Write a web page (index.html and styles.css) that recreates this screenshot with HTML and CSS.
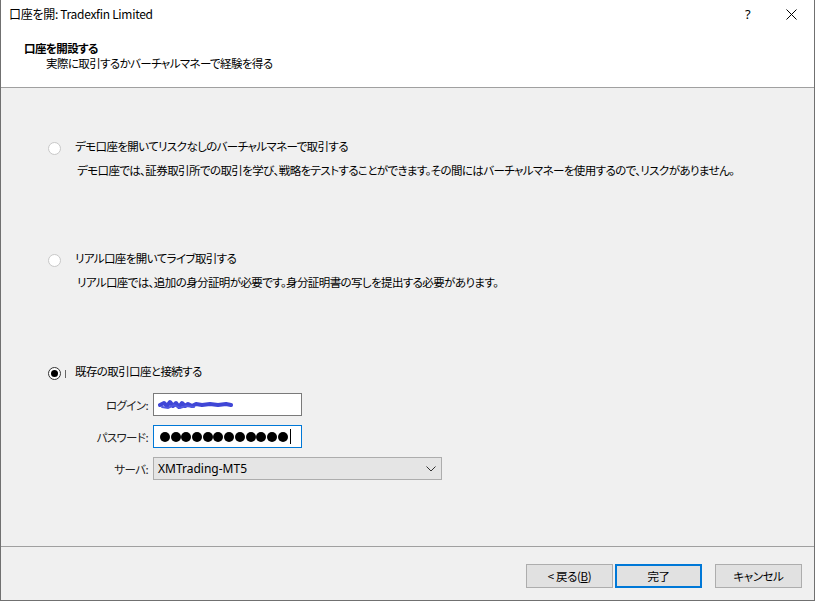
FILE: index.html
```html
<!DOCTYPE html>
<html lang="ja">
<head>
  <meta charset="UTF-8" />
  <title>口座を開</title>
  <link rel="stylesheet" href="styles.css">
</head>
<body>
  <div class="window">
    <div class="titlebar">
      <span class="title">口座を開: Tradexfin Limited</span>
      <span class="help">?</span>
      <svg class="close" width="11" height="11" viewBox="0 0 11 11">
        <path d="M0.5 0.5 L10.5 10.5 M10.5 0.5 L0.5 10.5" stroke="#000" stroke-width="1" fill="none" />
      </svg>
    </div>

    <div class="header">
      <div class="header-title">口座を開設する</div>
      <div class="header-sub">実際に取引するかバーチャルマネーで経験を得る</div>
    </div>

    <div class="content">
      <div class="option">
        <div class="option-row">
          <span class="radio"></span>
          <span class="option-label">デモ口座を開いてリスクなしのバーチャルマネーで取引する</span>
        </div>
        <div class="option-desc">デモ口座では、証券取引所での取引を学び、戦略をテストすることができます。その間にはバーチャルマネーを使用するので、リスクがありません。</div>
      </div>

      <div class="option">
        <div class="option-row">
          <span class="radio"></span>
          <span class="option-label">リアル口座を開いてライブ取引する</span>
        </div>
        <div class="option-desc">リアル口座では、追加の身分証明が必要です。身分証明書の写しを提出する必要があります。</div>
      </div>

      <div class="option last">
        <div class="option-row">
          <span class="radio checked"></span>
          <span class="focus-mark"></span>
          <span class="option-label">既存の取引口座と接続する</span>
        </div>

        <div class="fields">
          <label class="field-label">ログイン:</label>
          <div class="input">
            <svg class="scribble" width="76" height="14" viewBox="0 0 76 14">
              <path d="M2 7 L6 5 L9 8 L12 4 L15 8 L18 5 L21 9 L24 5 L27 8 L30 6 L34 8 L38 6 L44 7 L52 6 L60 7 L68 6 L73 7" stroke="#3f46d6" stroke-width="4" fill="none" stroke-linecap="round" stroke-linejoin="round" />
              <path d="M4 9 L10 10 L16 7 L22 10 L28 8 L36 9" stroke="#5058e0" stroke-width="2" fill="none" stroke-linecap="round" />
            </svg>
          </div>

          <label class="field-label">パスワード:</label>
          <div class="input focused">
            <span class="dot"></span><span class="dot"></span><span class="dot"></span><span class="dot"></span><span class="dot"></span><span class="dot"></span><span class="dot"></span><span class="dot"></span><span class="dot"></span><span class="dot"></span><span class="dot"></span><span class="dot"></span><span class="caret"></span>
          </div>

          <label class="field-label">サーバ:</label>
          <div class="select">
            <span>XMTrading-MT5</span>
            <svg width="10" height="6" viewBox="0 0 10 6">
              <path d="M0.5 0.5 L5 5 L9.5 0.5" stroke="#333" stroke-width="1" fill="none" />
            </svg>
          </div>
        </div>
      </div>
    </div>

    <div class="footer">
      <button class="btn">&lt; 戻る(<u>B</u>)</button>
      <button class="btn default">完了</button>
      <button class="btn cancel">キャンセル</button>
    </div>
  </div>
</body>
</html>
```

FILE: styles.css
```css
body {
  margin: 0;
  font-family: "Noto Sans CJK JP", "Noto Sans", sans-serif;
  font-size: 11.5px;
  letter-spacing: -0.6px;
  color: #000;
  background: #fff;
}
.window {
  width: 815px;
  height: 601px;
  box-sizing: border-box;
  border: 1px solid #707070;
  border-top: none;
  display: flex;
  flex-direction: column;
  background: #f0f0f0;
  font-feature-settings: "palt";
}
.titlebar {
  height: 30px;
  background: #fff;
  display: flex;
  align-items: center;
  padding-left: 8px;
  padding-right: 17px;
}
.title {
  flex: 1;
  line-height: 16px;
  margin-top: -2px;
  font-size: 12px;
  letter-spacing: -0.3px;
}
.help {
  font-family: "Noto Sans", sans-serif;
  font-size: 13px;
  margin-right: 36px;
  margin-top: -2px;
}
.close {
  margin-top: -2px;
}
.header {
  height: 58px;
  background: #fff;
  border-bottom: 1px solid #a0a0a0;
  padding-left: 23px;
  padding-top: 10px;
  box-sizing: border-box;
}
.header-title {
  font-weight: bold;
  line-height: 16px;
}
.header-sub {
  padding-left: 22px;
  line-height: 16px;
  margin-top: -1px;
}
.content {
  flex: 1;
  padding-left: 47px;
  padding-top: 50px;
  border-bottom: 1px solid #a0a0a0;
}
.option + .option {
  margin-top: 72px;
}
.option.last {
  margin-top: 73px;
}
.option-row {
  display: flex;
  align-items: center;
  height: 16px;
}
.radio {
  width: 11px;
  height: 11px;
  border: 1px solid #c8c8c8;
  border-radius: 50%;
  background: #fff;
  margin-right: 14px;
  margin-top: 4px;
  position: relative;
}
.radio.checked {
  border-color: #333;
  margin-right: 4px;
}
.radio.checked::after {
  content: "";
  position: absolute;
  left: 2px;
  top: 2px;
  width: 7px;
  height: 7px;
  border-radius: 50%;
  background: #000;
}
.focus-mark {
  width: 1px;
  height: 8px;
  background: #666;
  margin-right: 9px;
  margin-top: 6px;
}
.option-desc {
  margin-top: 8px;
  padding-left: 29px;
  line-height: 16px;
}
.fields {
  display: grid;
  grid-template-columns: 100px auto;
  column-gap: 5px;
  row-gap: 9px;
  margin-top: 14px;
  align-items: center;
}
.field-label {
  text-align: right;
  color: #222;
}
.input {
  width: 149px;
  height: 23px;
  box-sizing: border-box;
  border: 1px solid #7a7a7a;
  background: #fff;
  display: flex;
  align-items: center;
  padding-left: 4px;
}
.input.focused {
  border-color: #0078d7;
  padding-left: 6px;
  gap: 0.7px;
}
.dot {
  width: 10px;
  height: 10px;
  border-radius: 50%;
  background: #000;
}
.caret {
  width: 1px;
  height: 15px;
  background: #000;
  margin-left: 2px;
}
.select {
  width: 289px;
  height: 23px;
  box-sizing: border-box;
  border: 1px solid #adadad;
  background: #e5e5e5;
  display: flex;
  align-items: center;
  justify-content: space-between;
  padding-left: 4px;
  padding-right: 5px;
  font-family: "Noto Sans", sans-serif;
  font-size: 12px;
  letter-spacing: 0;
}
.footer {
  height: 53px;
  display: flex;
  justify-content: flex-end;
  align-items: flex-start;
  padding-top: 17px;
  padding-right: 12px;
  box-sizing: border-box;
}
.btn {
  width: 87px;
  height: 24px;
  border: 1px solid #adadad;
  background: #e1e1e1;
  font-family: "Noto Sans CJK JP", "Noto Sans", sans-serif;
  font-size: 11.5px;
  letter-spacing: -0.4px;
  font-feature-settings: "palt";
  color: #000;
  padding: 0;
  margin-left: 2px;
}
.btn.default {
  border: 2px solid #0078d7;
}
.btn.cancel {
  margin-left: 13px;
}
```
